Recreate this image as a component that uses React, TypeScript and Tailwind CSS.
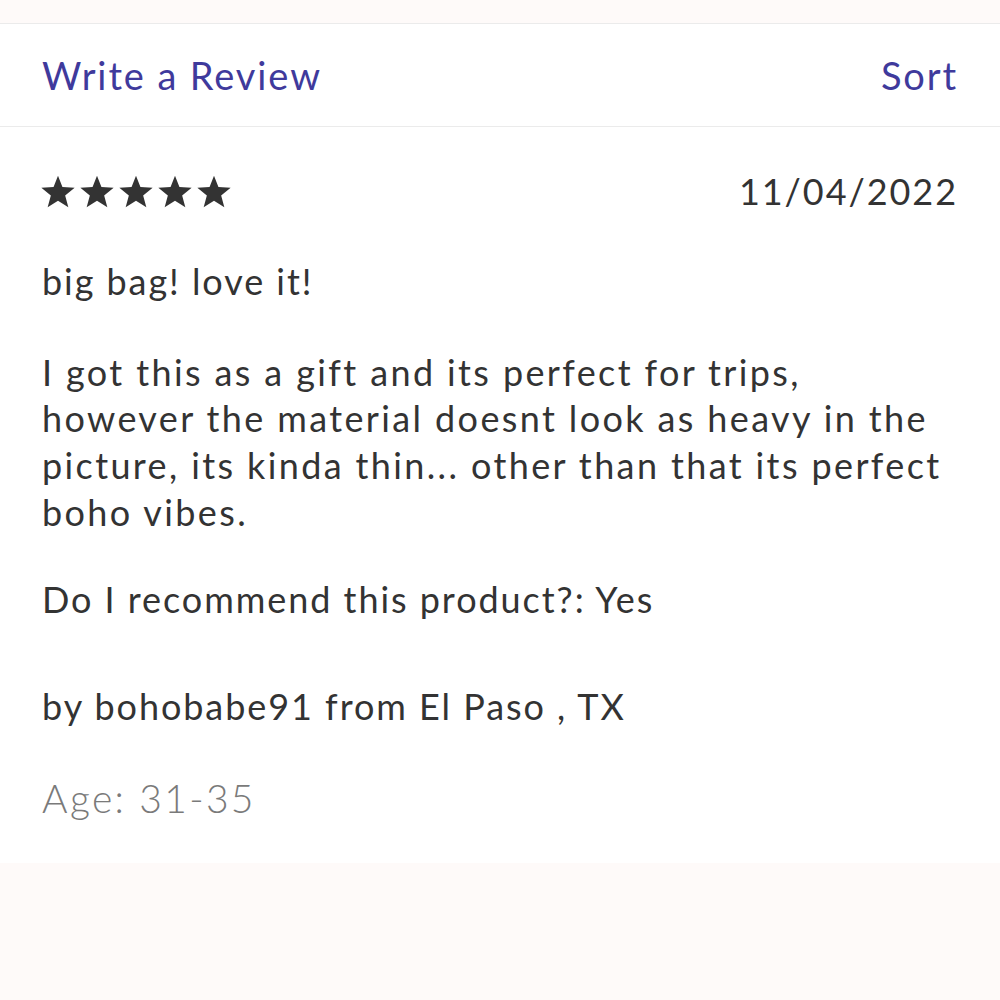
const Star = () => (
  <svg viewBox="0 0 24 24" className="w-[36px] h-[36px] fill-[#333333]">
    <path d="M12 1.8l2.95 7.6 8.15.45-6.33 5.16 2.12 7.9L12 18.5l-6.89 4.41 2.12-7.9L.9 9.85l8.15-.45z" />
  </svg>
);

export default function App() {
  return (
    <div className="w-full min-h-[1000px] bg-[#fefaf9] font-['Lato','Noto_Sans',sans-serif]">
      <div className="h-[24px] border-b border-[#ebebeb]" />
      <div className="bg-white">
        <header className="h-[103px] flex items-center justify-between px-[42px] border-b border-[#ebebeb] text-[38px] tracking-[0.05em] text-[#3f3a9c]">
          <span>Write a Review</span>
          <span>Sort</span>
        </header>
        <section className="px-[42px] pt-[41px] pb-[40px] text-[#333333] text-[36px] tracking-[0.054em] leading-[46.67px]">
          <div className="flex items-center justify-between h-[46px]">
            <div className="flex gap-[3px] -ml-[2px]">
              <Star />
              <Star />
              <Star />
              <Star />
              <Star />
            </div>
            <span>11/04/2022</span>
          </div>
          <p className="mt-[44px]">big bag! love it!</p>
          <p className="mt-[44px] whitespace-nowrap tracking-[0.066em]">
            I got this as a gift and its perfect for trips,
            <br />
            however the material doesnt look as heavy in the
            <br />
            picture, its kinda thin... other than that its perfect
            <br />
            boho vibes.
          </p>
          <p className="mt-[41px]">Do I recommend this product?: Yes</p>
          <p className="mt-[60px]">by bohobabe91 from El Paso , TX</p>
          <p className="mt-[43px] text-[39px] leading-[50px] tracking-[0.06em] text-[#7a7a7a] font-light">Age: 31-35</p>
        </section>
      </div>
    </div>
  );
}
